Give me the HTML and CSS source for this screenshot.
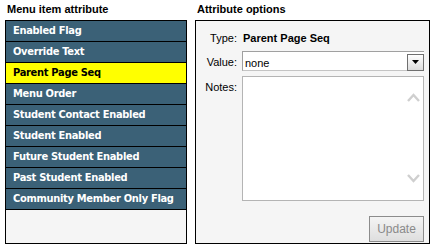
FILE: index.html
```html
<!DOCTYPE html>
<html>
<head>
<meta charset="utf-8">
<link rel="stylesheet" href="styles.css">
</head>
<body>
<div class="page">
  <div class="col col-left">
    <div class="heading">Menu item attribute</div>
    <div class="panel list">
      <div class="item">Enabled Flag</div>
      <div class="item">Override Text</div>
      <div class="item selected">Parent Page Seq</div>
      <div class="item">Menu Order</div>
      <div class="item">Student Contact Enabled</div>
      <div class="item">Student Enabled</div>
      <div class="item">Future Student Enabled</div>
      <div class="item">Past Student Enabled</div>
      <div class="item">Community Member Only Flag</div>
    </div>
  </div>
  <div class="col col-right">
    <div class="heading">Attribute options</div>
    <div class="panel options">
      <div class="label row-type">Type:</div>
      <div class="value type-value">Parent Page Seq</div>
      <div class="label row-value">Value:</div>
      <div class="select">
        <span class="select-text">none</span>
        <span class="select-btn"><svg width="7" height="4" viewBox="0 0 7 4"><path d="M0 0H7L3.5 4Z" fill="#000"/></svg></span>
      </div>
      <div class="label row-notes">Notes:</div>
      <div class="textarea">
        <svg class="chev up" width="13" height="9" viewBox="0 0 13 9"><path d="M1 8L6.5 2L12 8" fill="none" stroke="#cfcfcf" stroke-width="2.4"/></svg>
        <svg class="chev down" width="13" height="9" viewBox="0 0 13 9"><path d="M1 1L6.5 7L12 1" fill="none" stroke="#cfcfcf" stroke-width="2.4"/></svg>
      </div>
      <div class="button">Update</div>
    </div>
  </div>
</div>
</body>
</html>
```

FILE: styles.css
```css
html, body {
  margin: 0;
  padding: 0;
  background: #ffffff;
}
.page {
  display: flex;
  gap: 8px;
  padding-left: 5px;
  font-family: "Liberation Sans", Arial, sans-serif;
  font-size: 11px;
  color: #000;
}
.col-left { width: 182px; }
.col-right { width: 235px; }
.heading {
  font-weight: bold;
  font-size: 11px;
  line-height: 13px;
  padding: 3px 0 0 2px;
  height: 17px;
}
.panel {
  box-sizing: border-box;
  height: 224px;
  border: 1px solid #000;
  background: #f5f5f5;
}
.item {
  height: 20px;
  border-bottom: 1px solid #000;
  background: #3b6177;
  color: #fff;
  font-family: "DejaVu Sans Condensed", "DejaVu Sans", sans-serif;
  font-weight: bold;
  font-size: 11px;
  letter-spacing: -0.3px;
  line-height: 20px;
  padding-left: 7px;
  white-space: nowrap;
}
.item.selected {
  background: #ffff00;
  color: #000;
}
.options {
  display: grid;
  grid-template-columns: 46px 182px;
  grid-template-rows: 14px 19px 125px 26px;
  row-gap: 6px;
  padding-top: 10px;
  align-content: start;
}
.label {
  text-align: right;
  padding-right: 5px;
  color: #000;
  line-height: 14px;
}
.row-value { align-self: center; padding-top: 2px; }
.row-notes { padding-top: 4px; }
.type-value {
  font-weight: bold;
  line-height: 14px;
  padding-left: 1px;
}
.select {
  box-sizing: border-box;
  display: flex;
  align-items: center;
  justify-content: space-between;
  background: #fff;
  border-top: 1px solid #a0a0a0;
  border-left: 1px solid #a0a0a0;
  border-bottom: 1px solid #c4c4c4;
  height: 20px;
}
.select-text {
  padding-left: 2px;
  padding-top: 3px;
}
.select-btn {
  box-sizing: border-box;
  width: 17px;
  height: 17px;
  margin-top: 2px;
  border: 1px solid #6f6f6f;
  background: linear-gradient(#ffffff, #dcdcdc);
  display: flex;
  align-items: center;
  justify-content: center;
}
.textarea {
  box-sizing: border-box;
  position: relative;
  background: #fff;
  border: 1px solid #b4b4b4;
}
.chev {
  position: absolute;
  right: 3px;
}
.chev.up { top: 16px; }
.chev.down { bottom: 17px; }
.button {
  grid-column: 2;
  justify-self: end;
  box-sizing: border-box;
  width: 55px;
  height: 26px;
  margin-top: 9px;
  border: 1px solid #8c8c8c;
  background: linear-gradient(#f4f4f4, #dedede);
  color: #8a8a8a;
  font-size: 12px;
  display: flex;
  align-items: center;
  justify-content: center;
}
```
